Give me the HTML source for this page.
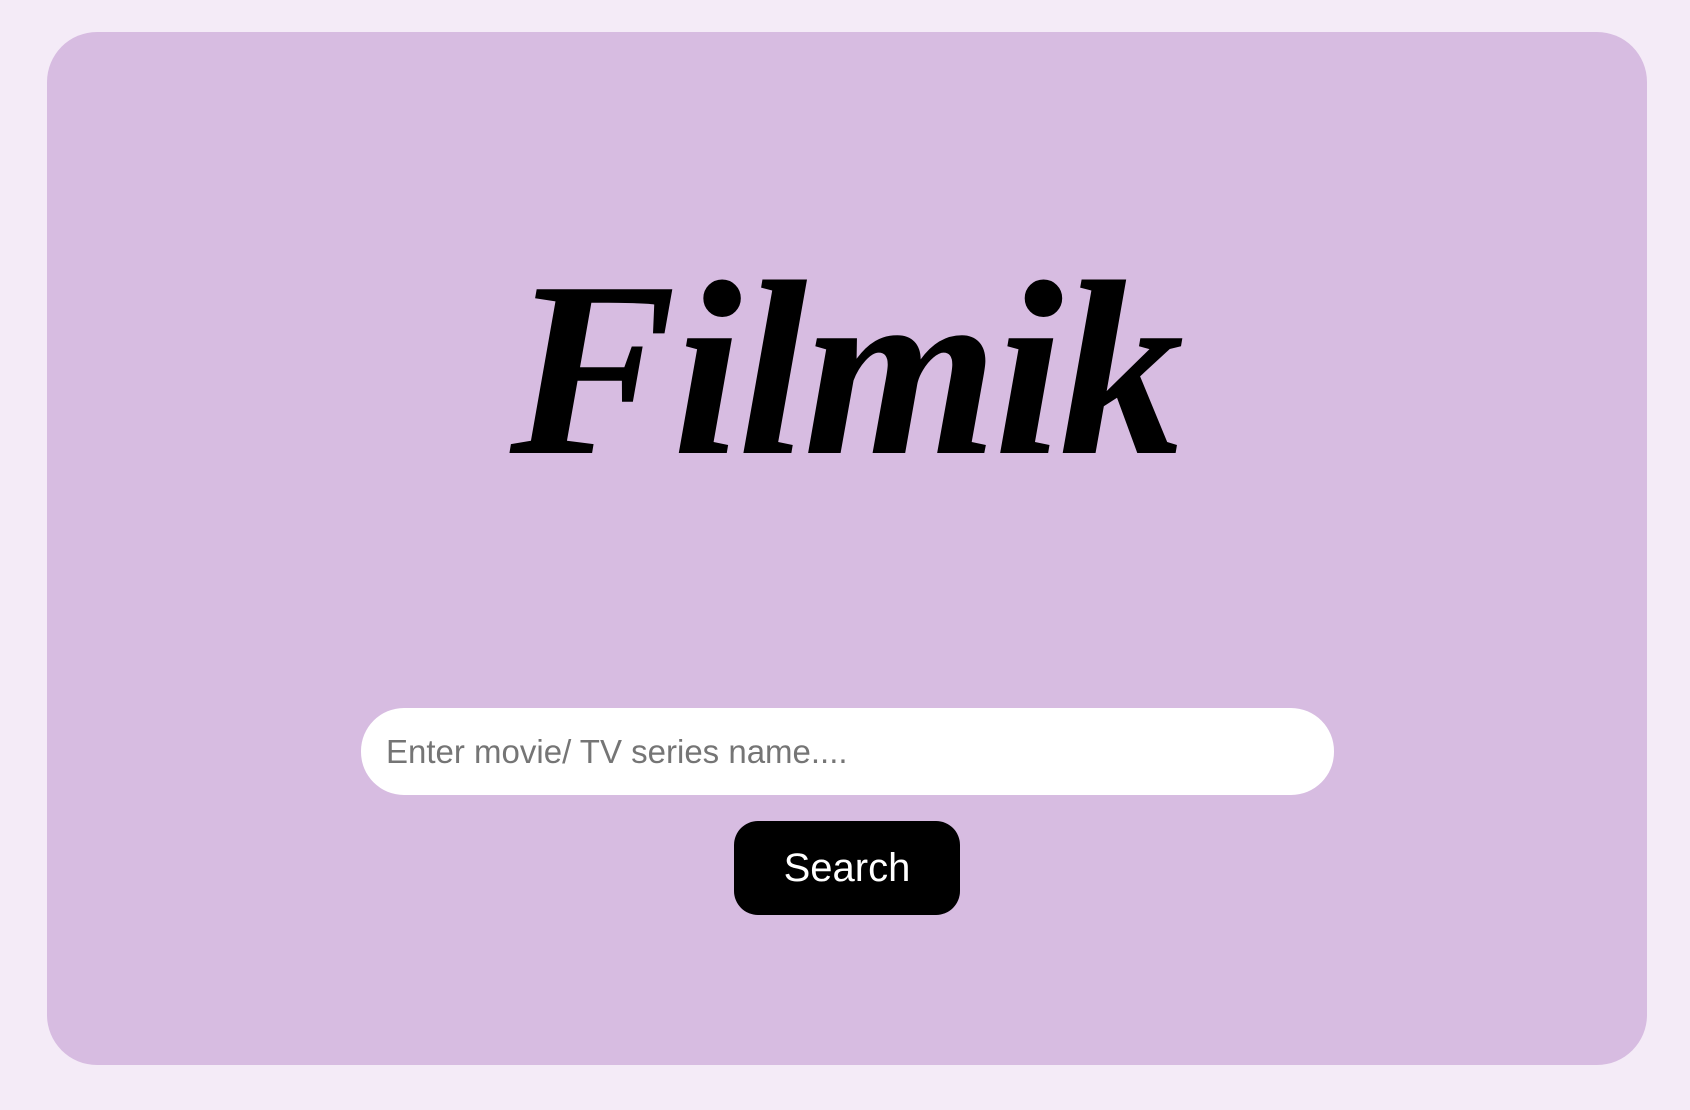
<!DOCTYPE html>
<html>
<head>
<meta charset="utf-8">
<style>
  html,body{margin:0;padding:0;}
  body{width:1690px;height:1110px;background:#f4ebf7;position:relative;overflow:hidden;font-family:"Liberation Sans",Arial,sans-serif;}
  .card{position:absolute;left:47px;top:32px;width:1600px;height:1033px;background:#d7bce1;border-radius:50px;}
  .logo{position:absolute;left:0;width:1690px;top:245px;text-align:center;font-family:"Liberation Serif",serif;font-style:italic;font-weight:bold;font-size:250px;line-height:1;color:#000;letter-spacing:-4px;}
  .input{position:absolute;left:361px;top:708px;width:973px;height:87px;background:#fff;border-radius:43px;box-sizing:border-box;padding-left:25px;font-size:33px;line-height:87px;color:#757575;}
  .btn{position:absolute;left:734px;top:821px;width:226px;height:94px;background:#000;border-radius:24px;color:#fff;font-size:40px;line-height:94px;text-align:center;}
</style>
</head>
<body>
  <div class="card"></div>
  <div class="logo">Filmik</div>
  <div class="input">Enter movie/ TV series name....</div>
  <div class="btn">Search</div>
</body>
</html>
